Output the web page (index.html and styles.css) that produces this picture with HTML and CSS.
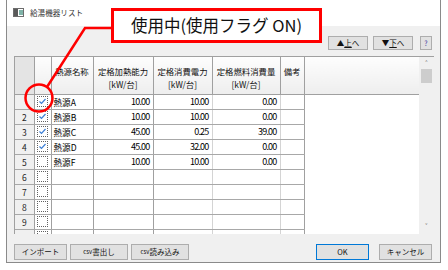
FILE: index.html
```html
<!DOCTYPE html>
<html>
<head>
    <link rel="stylesheet" href="styles.css">
</head>
<body>

<div class="window">
    <div class="titlebar">
        <svg class="app-icon" width="11" height="9" viewBox="0 0 11 9">
            <rect x="0.5" y="0.5" width="10" height="8" fill="#fff" stroke="#6d6d6d"/>
            <rect x="1" y="1" width="4" height="7" fill="#5a5a5a"/>
            <rect x="6" y="2" width="4" height="5" fill="#7fb3a8"/>
        </svg>
        <span class="title">給湯機器リスト</span>
    </div>

    <div class="client">
        <div class="toolbar">
            <button class="btn btn-move">▲<u>上</u>へ</button>
            <button class="btn btn-move">▼<u>下</u>へ</button>
            <button class="btn btn-help">?</button>
        </div>

        <div class="grid">
            <table class="sheet">
                <colgroup>
                    <col class="c-row"><col class="c-chk"><col class="c-name">
                    <col class="c-num"><col class="c-num2"><col class="c-fuel">
                    <col class="c-memo"><col>
                </colgroup>
                <thead>
                    <tr>
                        <th class="corner"></th>
                        <th></th>
                        <th>熱源名称</th>
                        <th>定格加熱能力<br>[kW/台]</th>
                        <th>定格消費電力<br>[kW/台]</th>
                        <th>定格燃料消費量<br>[kW/台]</th>
                        <th>備考</th>
                        <th class="filler"></th>
                    </tr>
                </thead>
                <tbody id="rows"></tbody>
            </table>
            <div class="scrollbar">
                <span class="arrow">&#708;</span>
                <div class="thumb"></div>
                <span class="arrow arrow-down">&#709;</span>
            </div>
        </div>

        <div class="footer">
            <div class="btn-group">
                <button class="btn btn-wide">インポート</button>
                <button class="btn btn-csv"><span class="small">csv</span>書出し</button>
                <button class="btn btn-csv"><span class="small">csv</span>読み込み</button>
            </div>
            <div class="btn-group">
                <button class="btn btn-wide btn-default">OK</button>
                <button class="btn btn-wide btn-cancel">キャンセル</button>
            </div>
        </div>
    </div>
</div>

<!-- annotation drawn over the dialog -->
<svg class="marks" width="448" height="270" viewBox="0 0 448 270">
    <polyline points="113,28 85,28 47,87" fill="none" stroke="#f00" stroke-width="2.5"/>
    <circle cx="39" cy="98" r="13.5" fill="none" stroke="#f00" stroke-width="2.5"/>
</svg>
<div class="callout">使用中(使用フラグ ON)</div>

<script>
    const data = [
        { on: true,  name: '熱源A', cap: '10.00', elec: '10.00', fuel: '0.00' },
        { on: true,  name: '熱源B', cap: '10.00', elec: '10.00', fuel: '0.00' },
        { on: true,  name: '熱源C', cap: '45.00', elec: '0.25',  fuel: '39.00' },
        { on: true,  name: '熱源D', cap: '45.00', elec: '32.00', fuel: '0.00' },
        { on: false, name: '熱源F', cap: '10.00', elec: '10.00', fuel: '0.00' }
    ];
    const check = '<svg width="9" height="9" viewBox="0 0 9 9"><path d="M1.5 4.5 L3.5 6.5 L7.5 2" fill="none" stroke="#3c7fd6" stroke-width="1.2"/></svg>';
    const tbody = document.getElementById('rows');

    for (let i = 0; i < 10; i++) {
        const d = data[i] || { on: false, name: '', cap: '', elec: '', fuel: '' };
        // first row number sits under the red circle, last row is clipped
        const num = (i === 0 || i === 9) ? '' : i + 1;
        const tr = document.createElement('tr');
        tr.innerHTML =
            '<td class="rowhdr">' + num + '</td>' +
            '<td class="chk"><span class="box">' + (d.on ? check : '') + '</span></td>' +
            '<td class="name">' + d.name + '</td>' +
            '<td class="num">' + d.cap + '</td>' +
            '<td class="num light">' + d.elec + '</td>' +
            '<td class="num light">' + d.fuel + '</td>' +
            '<td class="memo"></td>' +
            '<td class="filler"></td>';
        tbody.appendChild(tr);
    }
</script>

</body>
</html>
```

FILE: styles.css
```css
body {
    margin: 0;
    width: 448px;
    height: 270px;
    overflow: hidden;
    background: #fff;
    font-family: "Noto Sans CJK JP", "Noto Sans", sans-serif;
    position: relative;
}

.window {
    margin-left: 6px;
    width: 433px;
    border-left: 1px solid #8a8a8a;
    border-right: 1px solid #8a8a8a;
    border-bottom: 1px solid #8a8a8a;
}

.titlebar {
    height: 26px;
    background: #fff;
    display: flex;
    align-items: center;
    padding-left: 6px;
}

.app-icon {
    margin-top: -2px;
}

.title {
    margin-left: 6px;
    margin-top: -2px;
    font-size: 7.6px;
    color: #333;
}

.client {
    background: #f0f0f0;
    height: 236px;
    padding: 10px 8px 0 7px;
    box-sizing: border-box;
}

.toolbar {
    display: flex;
    justify-content: flex-end;
    gap: 5px;
    height: 14px;
}

.btn {
    font-family: "Noto Sans CJK JP", sans-serif;
    font-size: 7.5px;
    color: #111;
    background: #e1e1e1;
    border: 1px solid #adadad;
    padding: 0;
    margin: 0;
    line-height: 1;
    display: flex;
    align-items: center;
    justify-content: center;
}

.btn-move {
    width: 40px;
    height: 14px;
}

.btn-help {
    width: 12px;
    height: 14px;
    margin-left: 2px;
    color: #3a3aa0;
    font-size: 7px;
}

.grid {
    margin-top: 6px;
    margin-right: -2px;
    height: 178px;
    display: flex;
    background: #fff;
    border-top: 1px solid #a0a0a0;
    border-left: 1px solid #a0a0a0;
    box-sizing: border-box;
    overflow: hidden;
}

.sheet {
    width: 406px;
    border-collapse: collapse;
    table-layout: fixed;
    font-size: 9px;
}

.c-row { width: 19px; }
.c-chk { width: 17px; }
.c-name { width: 42px; }
.c-num { width: 60px; }
.c-num2 { width: 59px; }
.c-fuel { width: 68px; }
.c-memo { width: 24px; }

.sheet th {
    height: 37px;
    padding: 0;
    font-weight: normal;
    font-size: 8.4px;
    line-height: 12.5px;
    color: #111;
    vertical-align: top;
    padding-top: 8px;
    box-sizing: border-box;
    white-space: nowrap;
    overflow: hidden;
    background: linear-gradient(#fdfdfd, #eeeeee);
    border-right: 1px solid #a0a0a0;
    border-bottom: 1px solid #a0a0a0;
}

.sheet th.corner {
    background: #e4e4e4;
}

.sheet th.filler {
    border-right: none;
}

.sheet td {
    height: 15px;
    padding: 0;
    box-sizing: border-box;
    border-right: 1px solid #a0a0a0;
    border-bottom: 1px solid #a8a8a8;
    white-space: nowrap;
    overflow: hidden;
    line-height: 14px;
}

.sheet td.rowhdr {
    background: #f0f0f0;
    text-align: center;
    font-size: 8.5px;
    color: #222;
}

.sheet td.name {
    padding-left: 2px;
    font-size: 8.6px;
}

.sheet td.num {
    text-align: right;
    padding-right: 3px;
    letter-spacing: -0.8px;
    font-size: 9px;
}

.sheet td.light {
    border-right-color: #d4d4d4;
}

.sheet td.filler {
    border: none;
}

.chk {
    text-align: center;
}

.box {
    display: inline-block;
    width: 9px;
    height: 9px;
    border: 1px dotted #606060;
    vertical-align: middle;
    margin-top: -2px;
}

.box svg {
    display: block;
}

.scrollbar {
    width: 15px;
    flex: none;
    background: #f0f0f0;
    display: flex;
    flex-direction: column;
    align-items: center;
    font-size: 8px;
    color: #606060;
}

.arrow {
    height: 12px;
    line-height: 14px;
}

.thumb {
    width: 11px;
    height: 14px;
    background: #cdcdcd;
}

.arrow-down {
    margin-top: auto;
    margin-bottom: 2px;
}

.footer {
    margin-top: 10px;
    display: flex;
    justify-content: space-between;
}

.btn-group {
    display: flex;
    gap: 3px;
}

.btn-wide {
    width: 53px;
    height: 16px;
}

.btn-csv {
    width: 58px;
    height: 16px;
}

.small {
    font-size: 6px;
}

.btn-default {
    border-color: #0078d7;
}

.btn-cancel {
    margin-left: 7px;
}

.marks {
    position: absolute;
    left: 0;
    top: 0;
}

.callout {
    position: absolute;
    left: 111px;
    top: 8px;
    width: 211px;
    height: 35px;
    box-sizing: border-box;
    border: 3px solid #f00;
    background: #fff;
    font-size: 16.5px;
    line-height: 29px;
    text-align: center;
    color: #111;
}
```
